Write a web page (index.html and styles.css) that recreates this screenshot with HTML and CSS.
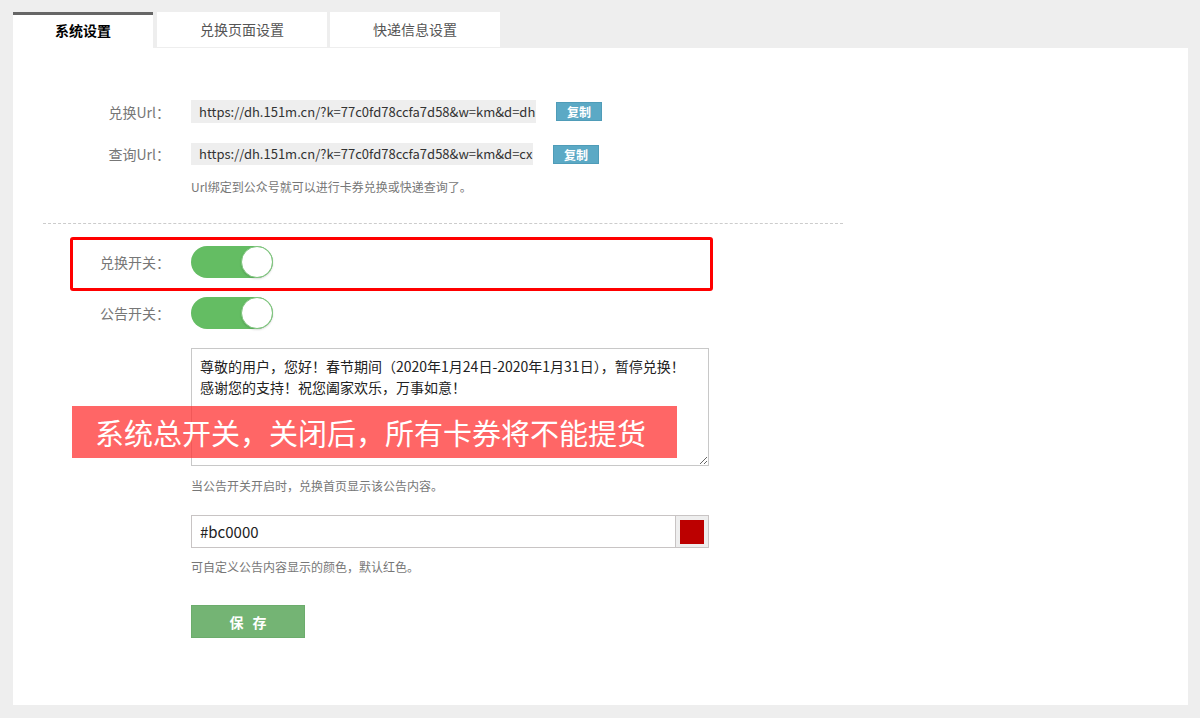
FILE: index.html
```html
<!DOCTYPE html>
<html lang="zh-CN">
<head>
<meta charset="utf-8">
<title>系统设置</title>
<link rel="stylesheet" href="styles.css">
</head>
<body>
<div class="page">
  <div class="tabs">
    <div class="tab tab-active">系统设置</div>
    <div class="tab">兑换页面设置</div>
    <div class="tab">快递信息设置</div>
  </div>
  <div class="panel">
    <div class="row url-row">
      <div class="label">兑换Url：</div>
      <div class="url-box url-box-1">https://dh.151m.cn/?k=77c0fd78ccfa7d58&amp;w=km&amp;d=dh</div>
      <button class="copy-btn">复制</button>
    </div>
    <div class="row url-row url-row-2">
      <div class="label">查询Url：</div>
      <div class="url-box url-box-2">https://dh.151m.cn/?k=77c0fd78ccfa7d58&amp;w=km&amp;d=cx</div>
      <button class="copy-btn">复制</button>
    </div>
    <div class="hint hint-url">Url绑定到公众号就可以进行卡券兑换或快递查询了。</div>

    <div class="divider"></div>

    <div class="row switch-row">
      <div class="label">兑换开关：</div>
      <div class="switch"><span class="knob"></span></div>
    </div>
    <div class="row switch-row switch-row-2">
      <div class="label">公告开关：</div>
      <div class="switch"><span class="knob"></span></div>
    </div>

    <div class="offset">
      <textarea class="notice" wrap="off">尊敬的用户，您好！春节期间（2020年1月24日-2020年1月31日），暂停兑换！
感谢您的支持！祝您阖家欢乐，万事如意！</textarea>
      <div class="hint hint-notice">当公告开关开启时，兑换首页显示该公告内容。</div>

      <div class="color-field">
        <div class="color-text">#bc0000</div>
        <div class="color-swatch"><span class="swatch-fill"></span></div>
      </div>
      <div class="hint hint-color">可自定义公告内容显示的颜色，默认红色。</div>

      <button class="save-btn">保 存</button>
    </div>

    <div class="highlight-box"></div>
    <div class="banner">系统总开关，关闭后，所有卡券将不能提货</div>
  </div>
</div>
</body>
</html>
```

FILE: styles.css
```css
* {
  box-sizing: border-box;
}

html, body {
  margin: 0;
  padding: 0;
}

body {
  background: #eeeeee;
  font-family: "Noto Sans CJK SC", "Noto Sans", sans-serif;
  color: #333;
  width: 1200px;
  height: 718px;
  overflow: hidden;
}

.page {
  padding: 12px 12px 13px 13px;
}

.tabs {
  display: flex;
  align-items: flex-start;
  height: 36px;
}

.tab {
  width: 170px;
  height: 35px;
  background: #fff;
  color: #555;
  font-size: 14px;
  line-height: 35px;
  text-align: center;
  margin-right: 3px;
}

.tab-active {
  width: 140px;
  height: 36px;
  border-top: 3px solid #666;
  color: #000;
  font-weight: bold;
  line-height: 30px;
  margin-right: 4px;
}

.panel {
  position: relative;
  background: #fff;
  width: 1175px;
  height: 657px;
  padding: 52px 0 0 30px;
}

.row {
  display: flex;
  align-items: center;
}

.label {
  width: 148px;
  padding-right: 21px;
  text-align: right;
  font-size: 14px;
  color: #777;
  white-space: nowrap;
}

.url-row {
  height: 23px;
}

.url-row-2 {
  margin-top: 20px;
  height: 22px;
}

.url-box {
  height: 23px;
  line-height: 23px;
  background: #eeeeee;
  font-size: 13px;
  color: #333;
  padding: 0 8px;
  white-space: nowrap;
  overflow: hidden;
}

.url-box-1 {
  width: 345px;
}

.url-box-2 {
  width: 342px;
  height: 22px;
  line-height: 22px;
}

.copy-btn {
  margin-left: 20px;
  width: 46px;
  height: 19px;
  padding: 0;
  border: 1px solid #4f9cb8;
  background: #5ba9c5;
  color: #fff;
  font-family: inherit;
  font-size: 12px;
  font-weight: bold;
  line-height: 17px;
}

.hint {
  font-size: 12px;
  line-height: 18px;
  color: #777;
}

.hint-url {
  margin: 13px 0 0 148px;
}

.divider {
  width: 800px;
  border-top: 1px dashed #cccccc;
  margin-top: 27px;
}

.switch-row {
  margin-top: 22px;
  height: 32px;
}

.switch-row-2 {
  margin-top: 19px;
}

.switch {
  position: relative;
  width: 82px;
  height: 32px;
  border-radius: 16px;
  background: #64bd63;
}

.knob {
  position: absolute;
  right: 0;
  top: 0;
  width: 32px;
  height: 32px;
  border-radius: 50%;
  background: #fff;
  border: 1px solid #7cc47b;
  box-shadow: 0 1px 2px rgba(0, 0, 0, 0.15);
}

.offset {
  margin-left: 148px;
}

.notice {
  display: block;
  margin-top: 19px;
  width: 518px;
  height: 118px;
  border: 1px solid #c8c8c8;
  padding: 7px 8px;
  font-family: "Noto Sans CJK SC", "Noto Sans", sans-serif;
  font-size: 14px;
  line-height: 21px;
  color: #222;
  overflow: hidden;
  resize: both;
}

.hint-notice {
  margin-top: 11px;
}

.color-field {
  display: flex;
  margin-top: 20px;
  width: 518px;
  height: 33px;
  border: 1px solid #c8c4c4;
}

.color-text {
  flex: 1;
  font-size: 15px;
  line-height: 31px;
  padding-left: 8px;
  color: #222;
}

.color-swatch {
  width: 33px;
  background: #eeeeee;
  border-left: 1px solid #c8c4c4;
  display: flex;
  align-items: center;
  justify-content: center;
}

.swatch-fill {
  display: block;
  width: 24px;
  height: 24px;
  background: #bc0000;
}

.hint-color {
  margin-top: 10px;
}

.save-btn {
  display: block;
  margin-top: 29px;
  width: 114px;
  height: 33px;
  padding: 0 0 0 3px;
  border: 1px solid #6cac6c;
  background: #74b474;
  color: #fff;
  font-family: inherit;
  font-size: 14px;
  font-weight: bold;
  letter-spacing: 3px;
}

.highlight-box {
  position: absolute;
  left: 57px;
  top: 189px;
  width: 643px;
  height: 54px;
  border: 3px solid #ff0000;
  border-radius: 3px;
}

.banner {
  position: absolute;
  left: 59px;
  top: 358px;
  width: 605px;
  height: 52px;
  background: rgba(255, 51, 51, 0.75);
  color: #fff;
  font-size: 29px;
  line-height: 52px;
  padding-left: 23px;
  white-space: nowrap;
}
```
